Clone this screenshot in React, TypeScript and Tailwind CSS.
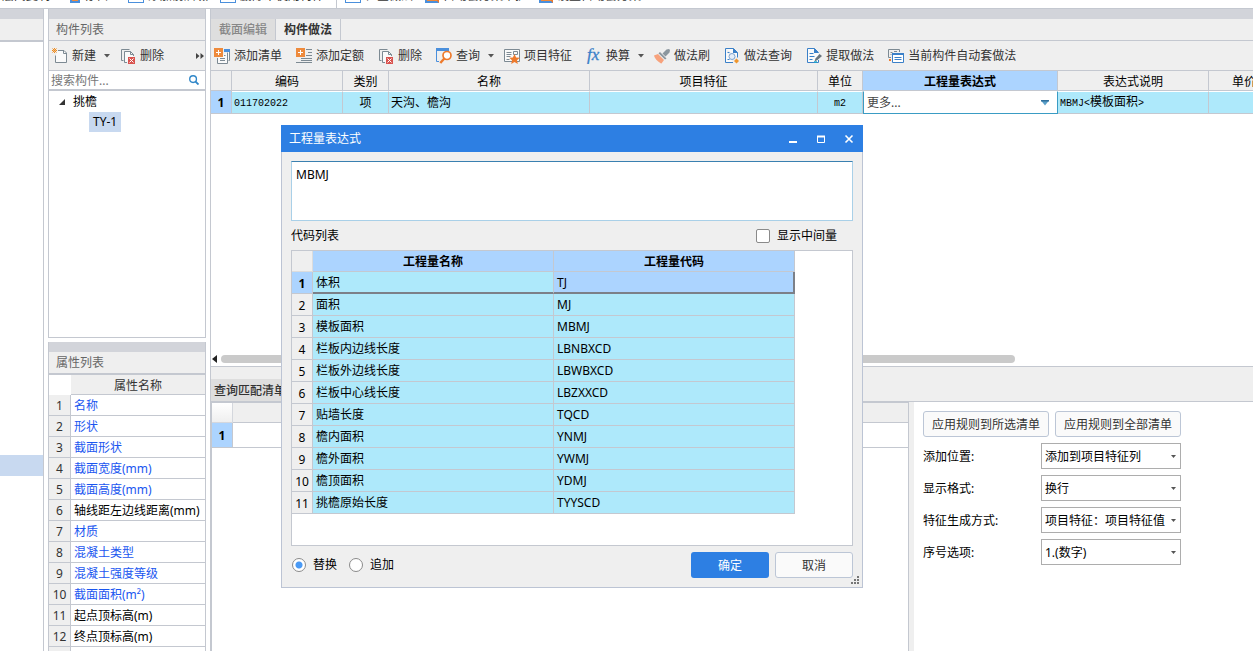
import type { ReactNode } from "react";

/* ---------- icons ---------- */

function Svg({ children }: { children: ReactNode }) {
  return (
    <svg width="16" height="16" viewBox="0 0 16 16" fill="none" className="shrink-0" aria-hidden="true">
      {children}
    </svg>
  );
}

const NewIcon = () => (
  <Svg>
    <path d="M6 2.500h6l2.500 2.500v9.500h-11v-7" fill="#fafafa" stroke="#7d8a93" />
    <path d="M11.500 2.500v3h3" stroke="#7d8a93" />
    <path d="M.5 .5l4 4M4.500 .5l-4 4M2.500 0v1.500M2.500 3.500v1.500M0 2.500h1.500M3.500 2.500h1.500" stroke="#ee8a1c" />
  </Svg>
);

const DeleteIcon = () => (
  <Svg>
    <path d="M3.500 12.500h-2v-11h8" stroke="#7d8a93" />
    <path d="M7 14.500h-2.500v-11h6l3 3v1.500" fill="#fafafa" stroke="#7d8a93" />
    <path d="M10.500 3.500v3h3" stroke="#7d8a93" />
    <rect x="8" y="9" width="7" height="7" fill="#d9534f" />
    <path d="M9.500 10.500l4 4M13.500 10.500l-4 4" stroke="#fff" />
  </Svg>
);

const AddListIcon = () => (
  <Svg>
    <path d="M12.500 1.500h3v11h-1M3.500 10v5.500h10v-11" fill="#fafafa" stroke="#7d8a93" />
    <path d="M10 1h6v3h-6z" fill="#4a8fdc" />
    <path d="M6 10.500h5M6 12.500h5M10 7.500h1.500" stroke="#7d8a93" />
    <rect width="9" height="9" fill="#ee8a3c" />
    <path d="M4.500 2v5M2 4.500h5" stroke="#fff" />
  </Svg>
);

const AddQuotaIcon = () => (
  <Svg>
    <path d="M10 1.500h6M12 4.500h4M10 7.500h6M5 10.500h11M5 12.500h11M0 14.500h16" stroke="#7d8a93" />
    <rect width="9" height="9" fill="#ee8a3c" />
    <path d="M4.500 2v5M2 4.500h5" stroke="#fff" />
  </Svg>
);

const QueryIcon = () => (
  <Svg>
    <path d="M.5 13.500V1h12v3M.5 13.500H3" stroke="#4a8fdc" />
    <path d="M0 0h13v3H0z" fill="#4a8fdc" />
    <circle cx="11" cy="7.500" r="4" fill="#fff" stroke="#ee7a2c" strokeWidth="1.700" />
    <path d="M8.300 10.500l-4 4.500" stroke="#ee7a2c" strokeWidth="2.400" />
  </Svg>
);

const FeatureIcon = () => (
  <Svg>
    <path d="M.5 1.500h15v12H.5z" fill="#fafafa" stroke="#7d8a93" />
    <path d="M2.500 4.500h5M2.500 6.500h5M2.500 8.500h4M2.500 11.500h3M9.500 3.500h4v3h-4z" stroke="#7d8a93" />
    <path d="M10.500 6l1.600 3.400 3.700.4-2.800 2.500.8 3.700-3.300-1.900L7.200 16l.8-3.700-2.800-2.500 3.700-.4z" fill="#ee7a2c" />
  </Svg>
);

const FxIcon = () => (
  <Svg>
    <text x="1" y="12" fontFamily="Liberation Serif, serif" fontStyle="italic" fontSize="17" fill="#3a80c8" stroke="#3a80c8" strokeWidth=".3">
      fx
    </text>
  </Svg>
);

const BrushIcon = () => (
  <Svg>
    <path d="M8.500 5.500l4-4 2.500-.5 1 1-.5 2.500-4 4z" fill="#8b969e" />
    <path d="M6 4l6.500 6.500-1.500 1L4.500 5.300z" fill="#8b969e" />
    <path d="M0 7.500l4-1.500 6 6L7.500 15.500c-2-.5-6.500-4-7.500-8z" fill="#f7a27c" />
  </Svg>
);

const MethodQueryIcon = () => (
  <Svg>
    <path d="M1.500.5h8l4 4v5M1.500.5v14H9" fill="#fafafa" stroke="#3a80c8" />
    <path d="M9 0v5h5z" fill="#3a80c8" />
    <path d="M3.500 4.500h2M3.500 11.500h2" stroke="#3a80c8" />
    <circle cx="8" cy="8.500" r="3" fill="#e5effa" stroke="#7fa4cf" />
    <path d="M10 13l2.500-2.500L15 13l-2.500 2.500z" fill="#f0962c" />
  </Svg>
);

const ExtractIcon = () => (
  <Svg>
    <path d="M12.500 12v2.500h-11V.5h7l4 4" fill="#fafafa" stroke="#3a80c8" />
    <path d="M8 0v5h5z" fill="#3a80c8" />
    <path d="M3.500 5.500h4M3.500 8.500h5M3.500 11.500h3" stroke="#3a80c8" />
    <path d="M8.500 13.500l1-3 4-4.500 2.500 2-4.500 4z" fill="#69757e" />
    <path d="M8 14h3" stroke="#20a8c8" strokeWidth="1.500" />
  </Svg>
);

const AutoIcon = () => (
  <Svg>
    <path d="M3 9.500H.5v-8h11V4M2.500 4.500h2M6 3.500h3M2.500 6.500h1" stroke="#7d8a93" />
    <path d="M4.500 5.500h11v9h-11z" fill="#fff" stroke="#3a80c8" />
    <path d="M4 5h12v2H4z" fill="#3a80c8" />
    <path d="M6.500 9.500h7M6.500 11.500h7" stroke="#3a80c8" />
    <path d="M1 11h2v2H1z" fill="#ee7a2c" />
  </Svg>
);

const Caret = () => (
  <svg width="6" height="4" viewBox="0 0 6 4" className="-mr-1 ml-1 shrink-0" aria-hidden="true">
    <path d="M0 0h6L3 3.500z" fill="#555" />
  </svg>
);

/* ---------- shared pieces ---------- */

function Tool({ icon, label, menu }: { icon: ReactNode; label: string; menu?: boolean }) {
  return (
    <button className="flex shrink-0 items-center gap-1 whitespace-nowrap text-[#333]">
      {icon}
      {label}
      {menu && <Caret />}
    </button>
  );
}

function Band() {
  return <div className="h-[10px] shrink-0 bg-[#d2d4da]" />;
}

function PanelTitle({ children }: { children?: ReactNode }) {
  return (
    <h2 className="h-[23px] shrink-0 border-b-2 border-[#c4c8d0] bg-[#efefef] px-[7px] leading-[22px] text-[#666]">
      {children}
    </h2>
  );
}

/* ---------- data ---------- */

const properties: [string, boolean][] = [
  ["名称", true],
  ["形状", true],
  ["截面形状", true],
  ["截面宽度(mm)", true],
  ["截面高度(mm)", true],
  ["轴线距左边线距离(mm)", false],
  ["材质", true],
  ["混凝土类型", true],
  ["混凝土强度等级", true],
  ["截面面积(m²)", true],
  ["起点顶标高(m)", false],
  ["终点顶标高(m)", false],
  ["", false],
];

const codes = [
  ["体积", "TJ"],
  ["面积", "MJ"],
  ["模板面积", "MBMJ"],
  ["栏板内边线长度", "LBNBXCD"],
  ["栏板外边线长度", "LBWBXCD"],
  ["栏板中心线长度", "LBZXXCD"],
  ["贴墙长度", "TQCD"],
  ["檐内面积", "YNMJ"],
  ["檐外面积", "YWMJ"],
  ["檐顶面积", "YDMJ"],
  ["挑檐原始长度", "TYYSCD"],
];

const options = [
  ["position", "添加位置:", "添加到项目特征列"],
  ["format", "显示格式:", "换行"],
  ["generate", "特征生成方式:", "项目特征：项目特征值"],
  ["order", "序号选项:", "1.(数字)"],
];

/* ---------- regions ---------- */

function Ribbon() {
  const item = "flex shrink-0 items-center gap-1";
  const blue = "h-[14px] w-4 border border-[#4a8fdc]";
  const orange = "h-[14px] w-[14px] border-2 border-[#4a8fdc] border-r-[#ee7a2c] bg-[#ee8a3c]";
  return (
    <nav className="flex h-2 shrink-0 items-end overflow-hidden whitespace-nowrap text-[#333]">
      <div className="flex items-center gap-3 pl-[2px] leading-6">
        <span className={item}>层间复制</span>
        <span className="flex shrink-0 items-center gap-1 pl-2 pr-2">
          <i className="h-[14px] w-[10px] border-2 border-[#4a8fdc] bg-[#ee8a3c]" />
          存档
        </span>
        <span className={item}>
          <i className={blue} />
          添加前后缀
        </span>
        <span className={item}>
          <i className={blue} />
          删除未使用构件
        </span>
        <span className="flex shrink-0 items-center gap-1 border-l border-[#c4c8d0] pl-2">
          <i className={blue} />
          检查做法
        </span>
        <span className={item}>
          <i className={orange} />
          自动套方案维护
        </span>
        <span className={item}>
          <i className={orange} />
          设置自动套方案
        </span>
      </div>
    </nav>
  );
}

function ComponentList() {
  return (
    <section className="flex h-[329px] shrink-0 flex-col border border-t-0 border-[#c4c8d0] bg-white">
      <Band />
      <h2 className="h-[22px] shrink-0 border-b border-[#c4c8d0] bg-[#efefef] px-[7px] leading-[22px] text-[#666]">
        构件列表
      </h2>
      <div className="flex h-[30px] shrink-0 items-center gap-[14px] border-b border-[#c4c8d0] bg-[#efefef] pl-[3px]">
        <Tool icon={<NewIcon />} label="新建" menu />
        <Tool icon={<DeleteIcon />} label="删除" />
        <button className="ml-auto pr-px" aria-label="更多">
          <svg width="8" height="6" viewBox="0 0 8 6" aria-hidden="true">
            <path d="M0 0l3.500 3L0 6zM4.500 0L8 3 4.500 6z" fill="#444" />
          </svg>
        </button>
      </div>
      <div className="flex h-5 shrink-0 items-center border-b-2 border-[#c4c8d0] pl-[2px] pr-[6px]">
        <input
          aria-label="搜索构件"
          placeholder="搜索构件..."
          className="w-0 grow bg-transparent pt-px outline-none placeholder:text-[#777]"
        />
        <svg width="10" height="10" viewBox="0 0 11 11" fill="none" stroke="#2f86c8" strokeWidth="1.500" aria-hidden="true">
          <circle cx="4.500" cy="4.500" r="3.700" />
          <path d="M7 7l3.500 3.500" strokeWidth="2" />
        </svg>
      </div>
      <ul className="leading-5 text-black">
        <li>
          <div className="flex h-[21px] items-center gap-2 pl-[10px]">
            <svg width="6" height="6" viewBox="0 0 6 6" aria-hidden="true">
              <path d="M6 0v6H0z" fill="#333" />
            </svg>
            挑檐
          </div>
          <ul className="pl-10">
            <li className="w-fit bg-[#c8d9f0] px-1">TY-1</li>
          </ul>
        </li>
      </ul>
    </section>
  );
}

function PropertyList() {
  return (
    <section className="flex min-h-0 grow flex-col overflow-hidden border-x border-[#c4c8d0] bg-white">
      <Band />
      <PanelTitle>属性列表</PanelTitle>
      <table className="w-full table-fixed border-separate border-spacing-0">
        <colgroup>
          <col className="w-[22px]" />
          <col />
        </colgroup>
        <thead>
          <tr className="h-5">
            <th className="p-0" />
            <th className="border-b border-[#c4c8d0] bg-[#efefef] p-0 pt-[2px] font-normal text-[#333]">属性名称</th>
          </tr>
        </thead>
        <tbody>
          {properties.map(([name, link], i) => (
            <tr key={i} className="h-[21px]">
              <td className="border-b border-r border-[#c4c8d0] bg-[#efefef] p-0 pt-[2px] text-center text-[#333]">
                {i + 1}
              </td>
              <td
                className={
                  link
                    ? "whitespace-nowrap border-b border-[#c4c8d0] p-0 pl-[3px] pt-[2px] text-[#1a56f0]"
                    : "whitespace-nowrap border-b border-[#c4c8d0] p-0 pl-[3px] pt-[2px] text-black"
                }
              >
                {name}
              </td>
            </tr>
          ))}
        </tbody>
      </table>
    </section>
  );
}

function MethodTable() {
  const th = "border-b border-r border-[#c4c8d0] bg-[#efefef] p-0 pt-[2px] font-normal";
  const td = "border-b border-r border-[#c4c8d0] border-t border-t-white bg-[#aee9fb] p-0 pl-[2px]";
  const center = "border-b border-r border-t border-[#c4c8d0] border-t-white bg-[#aee9fb] p-0 text-center";
  const mono = "font-['Liberation_Mono','Noto_Sans_CJK_SC',monospace] text-[10px]";
  return (
    <table className="w-[1120px] table-fixed border-separate border-spacing-0 whitespace-nowrap text-black">
      <colgroup>
        <col className="w-[21px]" />
        <col className="w-[111px]" />
        <col className="w-[46px]" />
        <col className="w-[201px]" />
        <col className="w-[228px]" />
        <col className="w-[45px]" />
        <col className="w-[195px]" />
        <col className="w-[151px]" />
        <col />
      </colgroup>
      <thead>
        <tr className="h-5">
          <th className={th} />
          <th className={th}>编码</th>
          <th className={th}>类别</th>
          <th className={th}>名称</th>
          <th className={th}>项目特征</th>
          <th className={th}>单位</th>
          <th className="border-b border-r border-[#c4c8d0] bg-[#acd4ff] p-0 pt-[2px] font-bold">工程量表达式</th>
          <th className={th}>表达式说明</th>
          <th className="border-b border-r border-[#c4c8d0] bg-[#efefef] p-0 pl-[23px] pt-[2px] text-left font-normal">
            单价
          </th>
        </tr>
      </thead>
      <tbody>
        <tr className="h-[23px]">
          <td className="border-b border-r border-[#c4c8d0] bg-[#acd4ff] p-0 pt-[2px] text-center font-bold">1</td>
          <td className={td}>
            <span className={mono}>011702022</span>
          </td>
          <td className={center}>项</td>
          <td className={td}>天沟、檐沟</td>
          <td className={td} />
          <td className={center}>
            <span className={mono}>m2</span>
          </td>
          <td className="border border-[#3a9cc4] border-t-white bg-white p-0">
            <div className="flex items-center pr-[7px]">
              <select aria-label="工程量表达式" className="h-5 grow appearance-none bg-white pl-[3px] text-[#444]">
                <option>更多...</option>
              </select>
              <svg width="10" height="6" viewBox="0 0 10 6" aria-hidden="true">
                <path d="M1 0.500h8L5 5.500z" fill="#5a9fc8" />
                <path d="M1 0h8v1.500H1z" fill="#2f6f9c" />
              </svg>
            </div>
          </td>
          <td className={td}>
            <span className={mono}>
              MBMJ&lt;<span className="text-xs leading-none">模板面积</span>&gt;
            </span>
          </td>
          <td className={td} />
        </tr>
      </tbody>
    </table>
  );
}

function QueryPane() {
  return (
    <div className="min-w-0 grow overflow-hidden border-l-2 border-r border-t border-[#c4c8d0] bg-white">
      <table className="w-full table-fixed border-separate border-spacing-0 text-black">
        <colgroup>
          <col className="w-[21px]" />
          <col />
        </colgroup>
        <thead>
          <tr className="h-5">
            <th className="border-b border-r border-[#d4d7dd] bg-gradient-to-b from-white to-[#efefef] p-0" />
            <th className="border-b border-[#c4c8d0] bg-[#efefef] p-0" />
          </tr>
        </thead>
        <tbody>
          <tr className="h-[25px]">
            <td className="border-b border-r border-[#c4c8d0] bg-[#acd4ff] p-0 pt-[2px] text-center font-bold">1</td>
            <td className="border-b border-[#c4c8d0] p-0" />
          </tr>
        </tbody>
      </table>
    </div>
  );
}

function RulePane() {
  const btn =
    "h-[26px] w-[126px] whitespace-nowrap rounded-[3px] border border-[#bcc6d6] bg-[#fafafa] pt-[2px] text-[#333]";
  return (
    <div className="w-[339px] shrink-0 bg-white pl-[9px] pt-[9px] text-black">
      <div className="flex gap-[6px]">
        <button className={btn}>应用规则到所选清单</button>
        <button className={btn}>应用规则到全部清单</button>
      </div>
      {options.map(([id, label, value]) => (
        <div key={id} className="mt-[6px] flex items-center">
          <label htmlFor={id} className="w-[118px] pt-px">
            {label}
          </label>
          <div className="relative">
            <select
              id={id}
              className="block h-[26px] w-[140px] appearance-none border border-[#adadad] bg-white pl-[3px] pt-px text-black"
            >
              <option>{value}</option>
            </select>
            <svg
              width="5"
              height="3"
              viewBox="0 0 5 3"
              className="pointer-events-none absolute right-[5px] top-3"
              aria-hidden="true"
            >
              <path d="M0 0h5L2.500 3z" fill="#555" />
            </svg>
          </div>
        </div>
      ))}
    </div>
  );
}

function ExpressionDialog() {
  const radio =
    "h-[14px] w-[14px] appearance-none rounded-full border border-[#8a8a8a] bg-white checked:bg-[radial-gradient(circle,#4a9af5_3px,white_4px)]";
  const head = "border-b border-r border-[#c4c8d0] bg-[#acd4ff] p-0 pt-[2px] font-bold";
  return (
    <div
      role="dialog"
      aria-label="工程量表达式"
      className="absolute left-[281px] top-[125px] flex w-[582px] flex-col bg-[#efefef] text-black"
    >
      <div className="flex h-[27px] items-center bg-[#2d7fe3] px-2 text-white">
        <span className="grow">工程量表达式</span>
        <div className="flex gap-[18px] pr-px">
          <button aria-label="最小化">
            <svg width="10" height="10" viewBox="0 0 10 10" aria-hidden="true">
              <path d="M1 7h8v2H1z" fill="#fff" />
            </svg>
          </button>
          <button aria-label="最大化">
            <svg width="10" height="10" viewBox="0 0 10 10" fill="none" stroke="#fff" aria-hidden="true">
              <path d="M1.500 2v6.500h7V2" />
              <path d="M1 2.500h8" strokeWidth="2" />
            </svg>
          </button>
          <button aria-label="关闭">
            <svg width="10" height="10" viewBox="0 0 10 10" fill="none" stroke="#fff" strokeWidth="1.600" aria-hidden="true">
              <path d="M1.500 1.500l7 7M8.500 1.500l-7 7" />
            </svg>
          </button>
        </div>
      </div>
      <div className="border border-t-0 border-[#bcc4d4] px-[9px] pb-[9px] pt-[9px]">
        <textarea
          aria-label="表达式"
          defaultValue="MBMJ"
          className="block h-[60px] w-full resize-none border border-[#a9d0e8] border-t-[#3a80b0] bg-white px-1 py-1 leading-[18px] outline-none"
        />
        <div className="flex h-[29px] items-center justify-between pr-4">
          <span>代码列表</span>
          <label className="flex items-center gap-[7px]">
            <input
              type="checkbox"
              className="h-[14px] w-[14px] appearance-none rounded-[2px] border border-[#8a8a8a] bg-white"
            />
            显示中间量
          </label>
        </div>
        <div className="h-[296px] border border-[#c4c8d0] bg-white">
          <table className="w-[503px] table-fixed border-separate border-spacing-0">
            <colgroup>
              <col className="w-[21px]" />
              <col className="w-[241px]" />
              <col className="w-[241px]" />
            </colgroup>
            <thead>
              <tr className="h-[21px]">
                <th className="border-b border-r border-[#dcdcdc] bg-[#efefef] p-0" />
                <th className={head}>工程量名称</th>
                <th className={head}>工程量代码</th>
              </tr>
            </thead>
            <tbody>
              {codes.map(([name, code], i) =>
                i === 0 ? (
                  <tr key={code} className="h-[22px]">
                    <td className="border-b border-r border-[#c4c8d0] bg-[#acd4ff] p-0 pt-[2px] text-center font-bold">1</td>
                    <td className="border-b-2 border-r border-b-[#7c8088] border-r-[#c4c8d0] bg-[#aee9fb] p-0 pl-[3px] pt-[2px]">
                      {name}
                    </td>
                    <td className="border-b-2 border-r-2 border-[#7c8088] bg-[#acd4ff] p-0 pl-[3px] pt-[2px]">{code}</td>
                  </tr>
                ) : (
                  <tr key={code} className="h-[22px]">
                    <td className="border-b border-r border-[#c4c8d0] bg-[#efefef] p-0 pt-[2px] text-center">{i + 1}</td>
                    <td className="border-b border-r border-[#c4c8d0] bg-[#aee9fb] p-0 pl-[3px]">{name}</td>
                    <td className="border-b border-r border-[#c4c8d0] bg-[#aee9fb] p-0 pl-[3px]">{code}</td>
                  </tr>
                ),
              )}
            </tbody>
          </table>
        </div>
        <div className="mt-[6px] flex h-[26px] items-center">
          <label className="flex items-center gap-[7px] pl-px">
            <input type="radio" name="mode" defaultChecked className={radio} />
            替换
          </label>
          <label className="ml-3 flex items-center gap-[7px]">
            <input type="radio" name="mode" className={radio} />
            追加
          </label>
          <button className="ml-auto h-[26px] w-[78px] rounded-[3px] bg-[#2d7fe3] pt-[2px] text-white">确定</button>
          <button className="ml-[6px] h-[26px] w-[78px] rounded-[3px] border border-[#bcc6d6] bg-[#fafafa] pt-[2px] text-[#333]">
            取消
          </button>
        </div>
      </div>
      <svg width="8" height="8" viewBox="0 0 8 8" className="absolute bottom-1 right-1" aria-hidden="true">
        <path d="M6 0h2v2H6zM3 3h2v2H3zM6 3h2v2H6zM0 6h2v2H0zM3 6h2v2H3zM6 6h2v2H6z" fill="#777" />
      </svg>
    </div>
  );
}

export default function App() {
  return (
    <div className="relative flex h-screen flex-col overflow-hidden bg-white font-['Noto_Sans','Noto_Sans_CJK_SC',sans-serif] text-xs leading-4">
      <Ribbon />
      <div className="flex min-h-0 grow border-t border-[#c4c8d0]">
        <aside className="mr-1 flex w-11 shrink-0 flex-col border-r border-[#c4c8d0]">
          <Band />
          <PanelTitle />
          <div className="mt-[413px] h-[21px] bg-[#c8d9f0]" />
        </aside>

        <div className="mr-1 flex w-[158px] shrink-0 flex-col gap-1">
          <ComponentList />
          <PropertyList />
        </div>

        <main className="flex min-w-0 grow flex-col">
          <section className="flex h-[358px] shrink-0 flex-col overflow-hidden border-b border-l border-[#c4c8d0]">
            <Band />
            <div role="tablist" className="flex h-[22px] shrink-0 border-b border-[#c4c8d0] bg-[#efefef]">
              <button
                role="tab"
                aria-selected="false"
                className="w-[65px] border-r border-[#c4c8d0] bg-[#dedede] font-medium text-[#888]"
              >
                截面编辑
              </button>
              <button role="tab" aria-selected="true" className="w-[65px] border-r border-[#c4c8d0] font-bold text-[#333]">
                构件做法
              </button>
            </div>
            <div className="flex h-[30px] shrink-0 items-center gap-[14px] overflow-hidden border-b border-[#c4c8d0] bg-[#efefef] pl-[3px]">
              <Tool icon={<AddListIcon />} label="添加清单" />
              <Tool icon={<AddQuotaIcon />} label="添加定额" />
              <Tool icon={<DeleteIcon />} label="删除" />
              <Tool icon={<QueryIcon />} label="查询" menu />
              <Tool icon={<FeatureIcon />} label="项目特征" />
              <Tool icon={<FxIcon />} label="换算" menu />
              <Tool icon={<BrushIcon />} label="做法刷" />
              <Tool icon={<MethodQueryIcon />} label="做法查询" />
              <Tool icon={<ExtractIcon />} label="提取做法" />
              <Tool icon={<AutoIcon />} label="当前构件自动套做法" />
            </div>
            <MethodTable />
            <div className="mb-[3px] mt-auto flex items-center gap-1 pl-px">
              <svg width="5" height="8" viewBox="0 0 5 8" aria-hidden="true">
                <path d="M5 0v8L0 4z" fill="#222" />
              </svg>
              <div className="h-2 w-[794px] rounded-full bg-[#cacaca]" />
            </div>
          </section>
          <div className="flex h-[35px] shrink-0 items-end border-b border-l border-[#c4c8d0] bg-[#efefef]">
            <h2 className="bg-[#dedede] px-[3px] pb-[2px] pt-1 font-medium text-[#333]">查询匹配清单</h2>
          </div>
          <div className="flex min-h-0 grow bg-[#efefef]">
            <QueryPane />
            <div className="w-[5px] shrink-0" />
            <RulePane />
          </div>
        </main>
      </div>
      <ExpressionDialog />
    </div>
  );
}
